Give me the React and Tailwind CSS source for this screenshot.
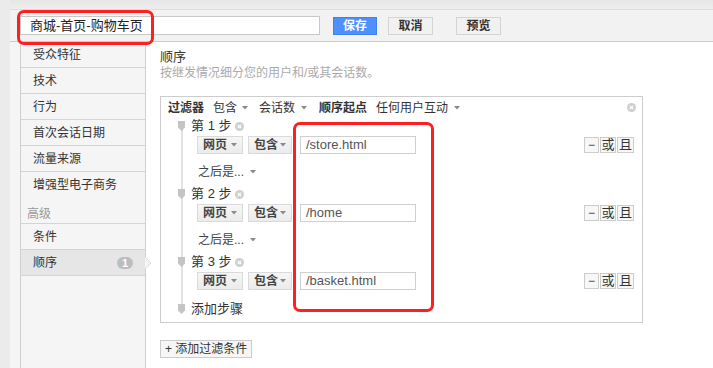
const FONT = { fontFamily: '"Liberation Sans", "Noto Sans CJK SC", sans-serif' };

const NAV_TOP = ['受众特征', '技术', '行为', '首次会话日期', '流量来源'];

const STEPS = [
  { n: 1, url: '/store.html' },
  { n: 2, url: '/home' },
  { n: 3, url: '/basket.html' },
];

function Caret({ className = '' }) {
  return (
    <svg width="6" height="4" viewBox="0 0 6 4" className={`shrink-0 ${className}`}>
      <path d="M0 0 H6 L3 3.5 Z" fill="#8a8a8a" />
    </svg>
  );
}

function Pin() {
  return (
    <svg width="7" height="10" viewBox="0 0 7 10" className="shrink-0">
      <path d="M0 0 H7 V6.5 L3.5 10 L0 6.5 Z" fill="#c4c4c4" />
    </svg>
  );
}

function ClearIcon() {
  return (
    <svg width="9" height="9" viewBox="0 0 9 9" className="shrink-0">
      <circle cx="4.5" cy="4.5" r="4.5" fill="#cfcfcf" />
      <path d="M2.8 2.8 L6.2 6.2 M6.2 2.8 L2.8 6.2" stroke="#fff" strokeWidth="1.2" />
    </svg>
  );
}

function Dropdown({ label, width }) {
  return (
    <div
      className={`h-[18px] ${width} shrink-0 flex items-center justify-between whitespace-nowrap pl-[5px] pr-[5px] border border-[#dadada] bg-gradient-to-b from-[#f6f6f6] to-[#ebebeb] text-[12px] font-bold text-[#444]`}
    >
      <span>{label}</span>
      <Caret />
    </div>
  );
}

function StepRow({ url }) {
  return (
    <div className="h-[18px] flex items-center pl-[36px] pr-[8px]">
      <Dropdown label="网页" width="w-[46px]" />
      <div className="ml-[5px]">
        <Dropdown label="包含" width="w-[44px]" />
      </div>
      <div className="ml-[8px] w-[116px] h-[18px] border border-[#cfcfcf] bg-white flex items-center pl-[5px] text-[13px] text-[#555]">
        {url}
      </div>
      <div className="ml-auto flex items-start gap-[1px] h-[16px]">
        <div className="w-[15px] h-[16px] border border-[#cccccc] bg-[#f7f7f7] flex items-center justify-center text-[12px] leading-none text-[#444]">−</div>
        <div className="w-[16px] h-[16px] border border-[#cccccc] bg-[#f7f7f7] flex items-end justify-center text-[13px] leading-[14px] text-[#333]">或</div>
        <div className="w-[17px] h-[16px] border border-[#cccccc] bg-[#f7f7f7] flex items-end justify-center text-[13px] leading-[14px] text-[#333]">且</div>
      </div>
    </div>
  );
}

function StepLabel({ n }) {
  return (
    <div className="h-[16px] flex items-center pl-[17px]">
      <Pin />
      <span className="ml-[6px] text-[13px] text-[#333] leading-[16px]">第 {n} 步</span>
      <span className="ml-[4px] mt-[1px]">
        <ClearIcon />
      </span>
    </div>
  );
}

function ThenIs() {
  return (
    <div className="h-[32px] pt-[10px] pl-[37px]">
      <div className="h-[16px] flex items-center text-[12px] text-[#444]">
        <span>之后是...</span>
        <Caret className="ml-[6px]" />
      </div>
    </div>
  );
}

export default function App() {
  return (
    <div className="relative w-[713px] h-[368px] overflow-hidden bg-white flex" style={FONT}>
      {/* 左侧灰边 */}
      <div className="w-[10px] h-full bg-[#ebebeb]" />

      <div className="flex-1 flex flex-col">
        <div className="h-[10px] bg-gradient-to-b from-[#e6e6e6] to-[#eeeeee] border-b border-[#dddddd]" />

        {/* 顶部工具栏 */}
        <div className="h-[32px] bg-[#f2f2f2] border-b border-[#cccccc] flex items-center pl-[10px]">
          <div className="w-[300px] h-[19px] border border-[#c8c8c8] bg-white flex items-center pl-[9px] text-[13px] text-[#222]">
            商城-首页-购物车页
          </div>
          <button className="ml-[13px] w-[44px] h-[18px] bg-[#4d90fe] border border-[#3f82ef] text-white text-[12px] font-bold leading-none">保存</button>
          <button className="ml-[11px] w-[45px] h-[18px] bg-[#f1f1f1] border border-[#d4d4d4] text-[#333] text-[12px] font-bold leading-none">取消</button>
          <button className="ml-[23px] w-[45px] h-[18px] bg-[#f1f1f1] border border-[#d4d4d4] text-[#333] text-[12px] font-bold leading-none">预览</button>
        </div>

        <div className="flex-1 flex">
          {/* 左侧导航 */}
          <div className="w-[136px] h-full bg-[#f5f5f5] pl-[10px]">
            <div className="w-[126px] h-full border-l border-r border-[#cfcfcf] flex flex-col text-[12px] text-[#333]">
              {NAV_TOP.map((t) => (
                <div key={t} className="h-[26px] border-b border-[#d4d4d4] flex items-center pl-[12px]">{t}</div>
              ))}
              <div className="h-[26px] flex items-center pl-[12px]">增强型电子商务</div>
              <div className="h-[26px] border-b border-[#d4d4d4] flex items-end pl-[6px] text-[#999] leading-[18px]">高级</div>
              <div className="h-[26px] border-b border-[#d4d4d4] flex items-center pl-[12px]">条件</div>
              <div className="relative h-[26px] border-b border-[#d4d4d4] bg-[#e6e6e6] flex items-center justify-between pl-[12px] pr-[12px]">
                <span>顺序</span>
                <span className="w-[16px] h-[12px] rounded-full bg-[#bdbdbd] text-white text-[11px] font-bold leading-[12px] text-center">1</span>
                <svg width="7" height="12" viewBox="0 0 7 12" className="absolute right-[-7px] top-[7px]">
                  <path d="M0 0 L6 6 L0 12 Z" fill="#f4f4f4" />
                  <path d="M0 0 L6 6 L0 12" fill="none" stroke="#dcdcdc" strokeWidth="1" />
                </svg>
              </div>
            </div>
          </div>

          {/* 主内容 */}
          <div className="flex-1 pl-[14px] pt-[7px]">
            <div className="text-[13px] leading-[16px] text-[#333]">顺序</div>
            <div className="text-[12px] leading-[16px] text-[#aaaaaa]">按继发情况细分您的用户和/或其会话数。</div>

            <div className="mt-[15px] w-[483px] border border-[#cccccc] bg-white">
              <div className="h-[21px] flex items-center pl-[7px] pr-[6px] text-[12px] text-[#333]">
                <span className="font-bold">过滤器</span>
                <span className="ml-[9px]">包含</span>
                <Caret className="ml-[5px]" />
                <span className="ml-[11px]">会话数</span>
                <Caret className="ml-[6px]" />
                <span className="ml-[12px] font-bold">顺序起点</span>
                <span className="ml-[9px]">任何用户互动</span>
                <Caret className="ml-[6px]" />
                <span className="ml-auto">
                  <ClearIcon />
                </span>
              </div>

              <div className="relative pb-[5px]">
                <div className="absolute left-[20px] top-[6px] bottom-[14px] w-[2px] bg-[#e2e2e2]" />
                <div className="relative">
                  {STEPS.map((s, i) => (
                    <div key={s.n}>
                      <StepLabel n={s.n} />
                      <div className="mt-[2px]">
                        <StepRow url={s.url} />
                      </div>
                      {i < STEPS.length - 1 && <ThenIs />}
                    </div>
                  ))}
                  <div className="pt-[11px] h-[27px]">
                    <div className="h-[16px] flex items-center pl-[17px]">
                      <Pin />
                      <span className="ml-[6px] text-[13px] text-[#333]">添加步骤</span>
                    </div>
                  </div>
                </div>
              </div>
            </div>

            <button className="mt-[17px] h-[18px] px-[4px] border border-[#cccccc] bg-[#f6f6f6] text-[12px] text-[#333] leading-none flex items-center">
              + 添加过滤条件
            </button>
          </div>
        </div>
      </div>

      {/* 红色标注框 */}
      <div className="absolute left-[17px] top-[10px] w-[137px] h-[35px] border-[3px] border-[#ff1f1f] rounded-[7px] pointer-events-none" />
      <div className="absolute left-[293px] top-[122px] w-[141px] h-[190px] border-[3px] border-[#ff1f1f] rounded-[7px] pointer-events-none" />
    </div>
  );
}
